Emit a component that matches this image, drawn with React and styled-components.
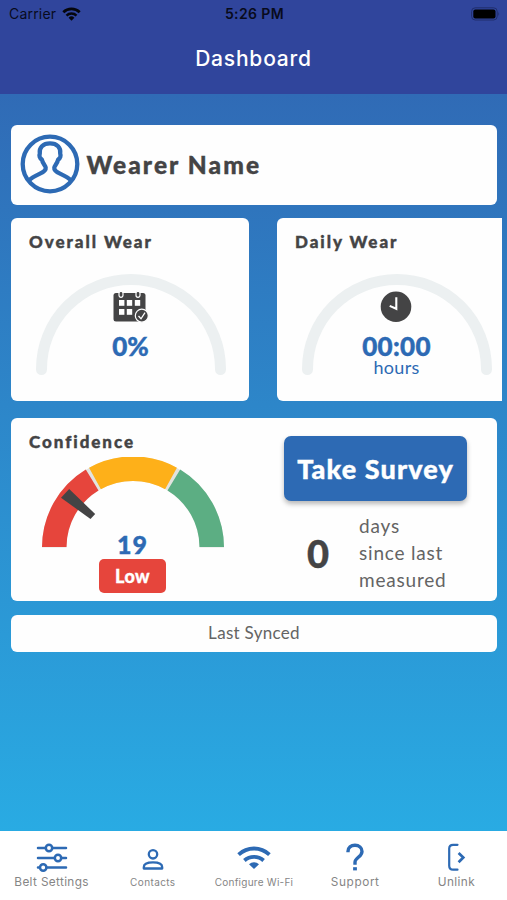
import React from 'react';
import styled, { createGlobalStyle } from 'styled-components';

const palette = {
    navy: '#30459c',
    blue: '#2d6ab4',
    dark: '#444445',
    gray: '#646464',
    track: '#ecf0f1',
    red: '#e6453c',
    yellow: '#feb019',
    green: '#5cae83',
};

const GlobalStyle = createGlobalStyle`
    * {
        box-sizing: border-box;
    }
    body {
        margin: 0;
        font-family: 'Lato', 'Liberation Sans', sans-serif;
    }
    svg {
        display: block;
        flex-shrink: 0;
    }
`;

const Screen = styled.div`
    display: flex;
    flex-direction: column;
    width: 507px;
    height: 900px;
    overflow: hidden;
    background: ${palette.navy};
`;

const StatusBar = styled.div`
    display: grid;
    grid-template-columns: 1fr auto 1fr;
    align-items: center;
    height: 28px;
    padding: 0 7px 0 9px;
    font-family: 'Inter', sans-serif;
    color: #080b1c;

    .carrier {
        display: flex;
        align-items: center;
        gap: 6px;
        padding-bottom: 1px;
        font-size: 14px;
        letter-spacing: 0.2px;
    }
    .time {
        padding-bottom: 1px;
        font-size: 14px;
        font-weight: 600;
        letter-spacing: 0.4px;
    }
    .battery {
        justify-self: end;
        margin-bottom: 1px;
    }
`;

const Header = styled.div`
    height: 66px;
    padding-top: 17px;
    text-align: center;
    font-family: 'Inter', sans-serif;
    font-size: 21px;
    font-weight: 500;
    line-height: 28px;
    letter-spacing: 0.8px;
    color: #fff;
`;

const Content = styled.div`
    display: flex;
    flex-direction: column;
    height: 737px;
    padding: 31px 10px 0 11px;
    background: linear-gradient(#306bb6, #29abe3);
`;

const Card = styled.div`
    height: ${(props) => props.$height}px;
    border-radius: 6px;
    background: #fefefe;
`;

const WearerCard = styled(Card)`
    display: flex;
    align-items: center;
    gap: 7px;
    padding: 0 8.5px 2px;
    font-size: 24.5px;
    font-weight: 900;
    letter-spacing: 2.1px;
    -webkit-text-stroke: 0.4px;
    color: ${palette.dark};
`;

// the second card runs off the right side of the scroller
const WearScroller = styled.div`
    display: flex;
    gap: 28px;
    margin: 13px -5px 17px 0;
    overflow: hidden;
`;

const WearCard = styled(Card)`
    flex: 0 0 238px;
    padding-top: 14px;
`;

const CardTitle = styled.div`
    padding-left: 18px;
    font-size: 17px;
    font-weight: 900;
    line-height: 20px;
    letter-spacing: 1.95px;
    -webkit-text-stroke: 0.4px;
    color: ${palette.dark};
`;

const Gauge = styled.div`
    display: grid;
    justify-items: center;
    width: 192px;
    margin: 22px 0 0 23.5px;

    > * {
        grid-area: 1 / 1;
    }
`;

const GaugeContent = styled.div`
    display: flex;
    flex-direction: column;
    align-items: center;
    padding-top: 17px;
    color: ${palette.blue};

    .value {
        margin-top: 12px;
        font-size: 26px;
        font-weight: 900;
        line-height: 22px;
        letter-spacing: ${(props) => props.$spacing || 0}px;
        -webkit-text-stroke: 0.4px;
    }
    .unit {
        font-size: 18px;
        line-height: 20px;
        letter-spacing: 0.3px;
    }
`;

const ConfidenceCard = styled(Card)`
    display: flex;
    padding-top: 14px;

    .left {
        width: 273px;
    }
`;

const Meter = styled.div`
    display: flex;
    flex-direction: column;
    align-items: center;
    width: 183px;
    margin: 5px 0 0 30px;

    .score {
        margin-top: -18px;
        font-size: 25px;
        font-weight: 900;
        line-height: 28px;
        letter-spacing: 1px;
        -webkit-text-stroke: 0.4px;
        color: ${palette.blue};
    }
`;

const LevelBadge = styled.div`
    width: 67px;
    height: 34px;
    margin-top: 1px;
    border-radius: 5px;
    background: ${palette.red};
    text-align: center;
    font-size: 18px;
    font-weight: 900;
    line-height: 34px;
    letter-spacing: 0.4px;
    -webkit-text-stroke: 0.3px;
    color: #fff;
`;

const SurveyButton = styled.button`
    display: block;
    width: 183px;
    height: 65px;
    margin-top: 4px;
    padding: 0;
    border: none;
    border-radius: 7px;
    background: ${palette.blue};
    box-shadow: 0 3px 5px rgba(0, 0, 0, 0.28);
    font-family: inherit;
    font-size: 27px;
    font-weight: 900;
    letter-spacing: 1.1px;
    -webkit-text-stroke: 0.4px;
    color: #fff;
`;

const LastMeasured = styled.div`
    display: flex;
    align-items: center;
    margin-top: 11px;
    padding-left: 23px;

    .count {
        width: 52px;
        font-size: 38px;
        font-weight: 900;
        -webkit-text-stroke: 0.4px;
        color: ${palette.dark};
    }
    .label {
        font-size: 19px;
        line-height: 27px;
        letter-spacing: 0.8px;
        color: ${palette.gray};
    }
`;

const SyncedCard = styled(Card)`
    margin-top: 14px;
    text-align: center;
    font-size: 17px;
    line-height: 36px;
    letter-spacing: 0.3px;
    color: ${palette.gray};
`;

const TabBar = styled.div`
    display: grid;
    grid-template-columns: repeat(5, 1fr);
    height: 69px;
    padding-left: 1px;
    background: #fff;
`;

const Tab = styled.div`
    display: flex;
    flex-direction: column;
    align-items: center;
    padding-top: 11px;
    font-family: 'Inter', sans-serif;
    font-size: ${(props) => props.$size}px;
    letter-spacing: ${(props) => props.$spacing || 0}px;
    line-height: 18px;
    white-space: nowrap;
    color: #858585;
`;

const StatusWifi = () => (
    <svg width="19" height="14" viewBox="0 0 19 14" fill="none" stroke="#05060c">
        <path d="M1.3 5.2a11.7 11.7 0 0 1 16.4 0" strokeWidth="2.7" />
        <path d="M4.5 8.6a7.2 7.2 0 0 1 10 0" strokeWidth="2.5" />
        <path d="M9.5 13.7 6.6 10.7a4.2 4.2 0 0 1 5.8 0Z" fill="#05060c" stroke="none" />
    </svg>
);

const Battery = () => (
    <svg className="battery" width="29" height="14" viewBox="0 0 29 14">
        <rect x="0.6" y="0.8" width="25.6" height="12.2" rx="3.6" fill="none" stroke="#202e6d" />
        <rect x="2.3" y="2.4" width="22.2" height="9" rx="2" fill="#000" />
        <path d="M27.4 4.8q1.5 2.1 0 4.2z" fill="#202e6d" />
    </svg>
);

const Avatar = () => (
    <svg width="60" height="60" viewBox="0 0 60 60" fill="none" stroke={palette.blue} strokeWidth="4.3">
        <circle cx="30" cy="30" r="27.3" />
        <path
            strokeLinejoin="round"
            d="M9 46.5c2.4-2.9 7-5 10.5-6.6 4.4-2 6.6-3.8 6.2-6.4-.3-1.9-2.9-3.6-3.9-7.9-2.1-1.4-2.9-4.1-2-6C18.9 13.4 23 9.4 30 9.4s11.1 4 10.2 10.2c.9 1.9.1 4.6-2 6-1 4.3-3.6 6-3.9 7.9-.4 2.6 1.8 4.4 6.2 6.4 3.5 1.6 8.1 3.7 10.5 6.6"
        />
    </svg>
);

const CalendarCheck = () => (
    <svg width="36" height="32" viewBox="0 0 36 32">
        <rect x="0.5" y="2" width="32" height="28.5" rx="2.5" fill={palette.dark} />
        {[8, 25].map((x) => (
            <rect key={x} x={x - 2} y="0.3" width="4" height="6" rx="2" fill={palette.dark} stroke="#fff" strokeWidth="1.2" />
        ))}
        {[[6, 9], [13.8, 9], [21.8, 9], [6, 18], [13.8, 18]].map(([x, y]) => (
            <rect key={`${x}-${y}`} x={x} y={y} width="5.4" height="5.8" fill="#fff" />
        ))}
        <circle cx="28.8" cy="24.7" r="6.5" fill={palette.dark} stroke="#fff" strokeWidth="1.2" />
        <path d="m25.5 25 2.5 2.8 4-6.2" fill="none" stroke="#fff" strokeWidth="1.3" />
    </svg>
);

const Clock = () => (
    <svg width="32" height="32" viewBox="0 0 32 32">
        <circle cx="16" cy="15.8" r="15.3" fill={palette.dark} />
        <path d="M16.3 6.3v11.5l-6.6-2.9" fill="none" stroke="#fff" strokeWidth="2.1" />
    </svg>
);

const GaugeTrack = () => (
    <svg width="192" height="105" viewBox="0 0 192 105">
        <path
            d="M6.5 95.5V95a89.5 89.5 0 0 1 179 0v.5"
            fill="none"
            stroke={palette.track}
            strokeWidth="11"
            strokeLinecap="round"
        />
    </svg>
);

const MeterDial = () => (
    <svg width="184" height="91" viewBox="0 0 184 91" fill="none" strokeWidth="24.5">
        <path d="M13.25 90.5a78.75 78.75 0 0 1 157.5 0" stroke="#e2e3df" />
        <path d="M13.25 90a78.75 78.75 0 0 1 37.9-67" stroke={palette.red} />
        <path d="M54 21.4a78.75 78.75 0 0 1 76 0" stroke={palette.yellow} />
        <path d="M132.85 23a78.75 78.75 0 0 1 37.9 67" stroke={palette.green} />
        <path d="M28.2 32 20 40.7 49.5 62l4.7-4.9z" fill={palette.dark} stroke="none" />
    </svg>
);

const tabIconProps = { fill: 'none', stroke: palette.blue, strokeLinecap: 'round' };

const SettingsIcon = () => (
    <svg width="32" height="31" viewBox="0 0 32 31" strokeWidth="2.5" {...tabIconProps}>
        <path d="M2 6h28M2 16h28M2 25.5h28" />
        <g fill="#fff" strokeWidth="2.5">
            <circle cx="13" cy="6" r="3.2" />
            <circle cx="22" cy="16" r="3.2" />
            <circle cx="7.2" cy="25.5" r="3.2" />
        </g>
    </svg>
);

const ContactIcon = () => (
    <svg width="24" height="31" viewBox="0 0 24 31" strokeWidth="2.3" {...tabIconProps}>
        <circle cx="12" cy="12.3" r="4.2" />
        <path d="M2.8 26.5v-1.3c0-3.1 4.1-4.8 9.2-4.8s9.2 1.7 9.2 4.8v1.3z" strokeLinejoin="round" />
    </svg>
);

const WifiIcon = () => (
    <svg width="34" height="31" viewBox="0 0 34 31" strokeWidth="3.8" {...tabIconProps} strokeLinecap="butt">
        <path d="M1.6 12.6a22.5 22.5 0 0 1 30.8 0" />
        <path d="M7.4 18.5a14.3 14.3 0 0 1 19.2 0" />
        <path d="m17 27-5-4.8a7.6 7.6 0 0 1 10 0z" fill={palette.blue} stroke="none" />
    </svg>
);

const HelpIcon = () => (
    <svg width="20" height="31" viewBox="0 0 20 31" strokeWidth="3.4" {...tabIconProps} strokeLinecap="butt">
        <path d="M3 10.2V9.4c0-4.2 3-6.2 7-6.2s7 2.5 7 6.2c0 5.5-7 6.2-7 11v2.4" />
        <path d="M10 25.2v3.2" strokeWidth="3.8" />
    </svg>
);

const UnlinkIcon = () => (
    <svg width="20" height="31" viewBox="0 0 20 31" strokeWidth="2.2" {...tabIconProps}>
        <path d="M11.5 2.8H7.1Q3.2 2.8 3.2 6.6v17.2q0 3.9 3.9 3.9h4.4" />
        <path d="m12.6 11 4.7 4.5-4.7 4.7" strokeWidth="2.7" strokeLinecap="butt" />
    </svg>
);

const tabs = [
    { label: 'Belt Settings', icon: SettingsIcon, size: 11.8, spacing: 0.35 },
    { label: 'Contacts', icon: ContactIcon, size: 10, spacing: 0.4 },
    { label: 'Configure Wi-Fi', icon: WifiIcon, size: 10, spacing: 0.25 },
    { label: 'Support', icon: HelpIcon, size: 11.8, spacing: 0.6 },
    { label: 'Unlink', icon: UnlinkIcon, size: 11.8, spacing: 0.4 },
];

const Dashboard = () => {
    return (
        <Screen>
            <GlobalStyle />
            <StatusBar>
                <div className="carrier">
                    Carrier
                    <StatusWifi />
                </div>
                <div className="time">5:26 PM</div>
                <Battery />
            </StatusBar>
            <Header>Dashboard</Header>
            <Content>
                <WearerCard $height={80}>
                    <Avatar />
                    Wearer Name
                </WearerCard>
                <WearScroller>
                    <WearCard $height={183}>
                        <CardTitle>Overall Wear</CardTitle>
                        <Gauge>
                            <GaugeTrack />
                            <GaugeContent>
                                <CalendarCheck />
                                <div className="value">0%</div>
                            </GaugeContent>
                        </Gauge>
                    </WearCard>
                    <WearCard $height={183}>
                        <CardTitle>Daily Wear</CardTitle>
                        <Gauge>
                            <GaugeTrack />
                            <GaugeContent $spacing={0.3}>
                                <Clock />
                                <div className="value">00:00</div>
                                <div className="unit">hours</div>
                            </GaugeContent>
                        </Gauge>
                    </WearCard>
                </WearScroller>
                <ConfidenceCard $height={183}>
                    <div className="left">
                        <CardTitle>Confidence</CardTitle>
                        <Meter>
                            <MeterDial />
                            <div className="score">19</div>
                            <LevelBadge>Low</LevelBadge>
                        </Meter>
                    </div>
                    <div>
                        <SurveyButton>Take Survey</SurveyButton>
                        <LastMeasured>
                            <div className="count">0</div>
                            <div className="label">
                                days<br />since last<br />measured
                            </div>
                        </LastMeasured>
                    </div>
                </ConfidenceCard>
                <SyncedCard $height={37}>Last Synced</SyncedCard>
            </Content>
            <TabBar>
                {tabs.map(({ label, icon: Icon, size, spacing }) => (
                    <Tab key={label} $size={size} $spacing={spacing}>
                        <Icon />
                        {label}
                    </Tab>
                ))}
            </TabBar>
        </Screen>
    );
};

export default Dashboard;
